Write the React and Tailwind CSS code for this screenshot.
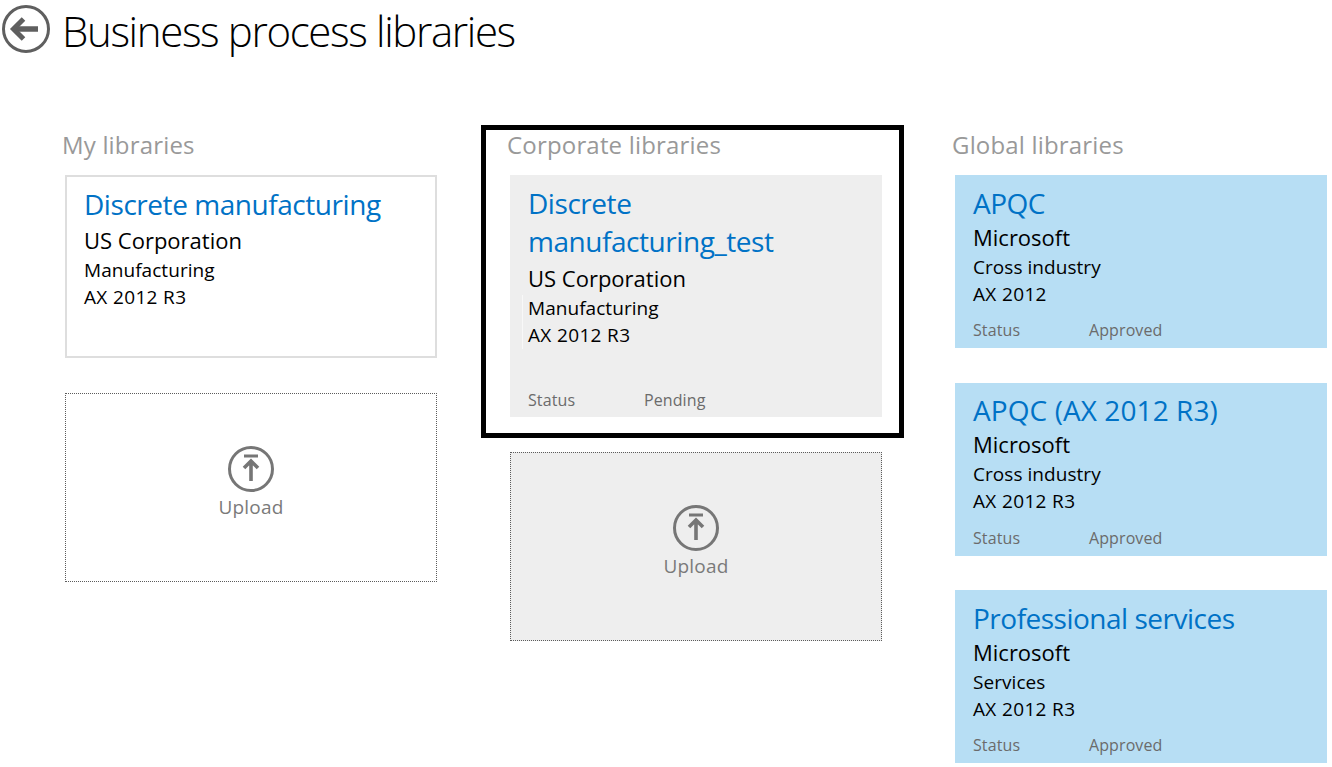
const font = "font-['Open_Sans',sans-serif]";

const Card = ({ title, owner, industry, version, status, rule = false, titleClass = "mt-[9px] mb-[0px] tracking-[-0.5px]", statusClass = "mb-[7px]", className = "" }) => (
    <div className={`w-[372px] flex flex-col ${className}`}>
        <div className={`text-[28px] leading-[38px] text-[#0072c6] ${titleClass}`}>{title}</div>
        <div className="text-[22px] leading-[30px] text-black">{owner}</div>
        <div className={`mt-[2px] ${rule ? "-ml-[6px] pl-[5px] border-l border-[#f8f8f8]" : ""}`}>
            <div className="text-[19px] leading-[27px] tracking-[0.05px] text-black">{industry}</div>
            <div className="text-[19px] leading-[27px] tracking-[0.35px] text-black">{version}</div>
        </div>
        {status && (
            <div className={`mt-auto flex text-[16px] leading-[22px] tracking-[0.1px] text-[#6b6b6b] ${statusClass}`}>
                <span className="w-[116px]">Status</span>
                <span>{status}</span>
            </div>
        )}
    </div>
);

const UploadIcon = () => (
    <svg width="48" height="48" viewBox="0 0 48 48" fill="none">
        <circle cx="24" cy="24" r="21.5" stroke="#767676" strokeWidth="3" />
        <rect x="17" y="9.5" width="14" height="3" fill="#767676" />
        <path d="M24 36V16M17 23l7-7 7 7" stroke="#767676" strokeWidth="3.6" />
    </svg>
);

const Upload = ({ className = "" }) => (
    <div className={`w-[372px] h-[189px] flex flex-col items-center justify-center border border-dotted border-[#5c5c5c] pb-[10px] ${className}`}>
        <UploadIcon />
        <div className="mt-[1px] text-[19px] leading-[26px] tracking-[0.2px] text-[#7a7a7a]">Upload</div>
    </div>
);

const Label = ({ children }) => (
    <div className="text-[24px] leading-[32px] tracking-[0.18px] text-[#999999]">{children}</div>
);

export default function App() {
    return (
        <div className={`w-[1332px] h-[767px] overflow-hidden bg-white ${font}`}>
            <div className="h-[125px] flex items-start pl-[2px] pt-[5px]">
                <svg width="48" height="48" viewBox="0 0 48 48" fill="none">
                    <circle cx="24" cy="24" r="22.5" stroke="#5f5f5f" strokeWidth="3" />
                    <path d="M36 24H14" stroke="#5f5f5f" strokeWidth="5.5" />
                    <path d="M21.5 14L11.5 24l10 10" stroke="#5f5f5f" strokeWidth="5" />
                </svg>
                <h1 className="ml-[12px] mt-[1px] text-[42px] leading-[50px] font-light tracking-[-1.36px] text-black">
                    Business process libraries
                </h1>
            </div>

            <div className="flex items-start">
                <div className="ml-[63px] w-[418px]">
                    <div className="h-[50px] pt-[4px] -ml-[1px]"><Label>My libraries</Label></div>
                    <Card className="ml-[2px] h-[183px] pl-[17px] border-2 border-[#dedede]" titleClass="mt-[8px] mb-[2px] tracking-[-0.45px]" title="Discrete manufacturing" owner="US Corporation" industry="Manufacturing" version="AX 2012 R3" />
                    <Upload className="ml-[2px] mt-[35px]" />
                </div>

                <div className="w-[471px]">
                    <div className="w-[423px] h-[313px] border-[5px] border-black pl-[24px]">
                        <div className="h-[46px] -mt-[1px] -ml-[3px]"><Label>Corporate libraries</Label></div>
                        <Card className="h-[242px] pl-[18px] bg-[#eeeeee]" rule titleClass="mt-[9px] mb-[3px] tracking-[-0.45px]" statusClass="mb-[6px]" title={<>Discrete<br />manufacturing_test</>} owner="US Corporation" industry="Manufacturing" version="AX 2012 R3" status="Pending" />
                    </div>
                    <Upload className="ml-[29px] mt-[14px] bg-[#eeeeee]" />
                </div>

                <div>
                    <div className="h-[50px] pt-[4px]"><Label>Global libraries</Label></div>
                    <div className="ml-[3px] flex flex-col">
                        <Card className="h-[173px] pl-[18px] bg-[#b7def4]" title="APQC" owner="Microsoft" industry="Cross industry" version="AX 2012" status="Approved" />
                        <Card className="mt-[35px] h-[173px] pl-[18px] bg-[#b7def4]" titleClass="mt-[8px] mb-[0px] tracking-[0.08px]" title="APQC (AX 2012 R3)" owner="Microsoft" industry="Cross industry" version="AX 2012 R3" status="Approved" />
                        <Card className="mt-[34px] h-[173px] pl-[18px] bg-[#b7def4]" title="Professional services" owner="Microsoft" industry="Services" version="AX 2012 R3" status="Approved" />
                    </div>
                </div>
            </div>
        </div>
    );
}
